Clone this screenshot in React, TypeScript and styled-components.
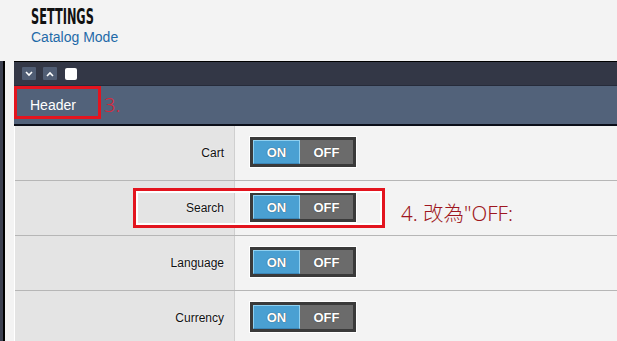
import styled, { createGlobalStyle } from 'styled-components'

const GlobalStyle = createGlobalStyle`
  body {
    margin: 0;
    background: #f3f3f3;
    font-family: "Liberation Sans", Arial, sans-serif;
  }
`

const Page = styled.div`
  display: flex;
  flex-direction: column;
  width: 617px;
  height: 341px;
  overflow: hidden;
`

const Heading = styled.div`
  flex-shrink: 0;
  height: 61px;
  box-sizing: border-box;
  padding: 6px 0 0 31px;
`

const Title = styled.div`
  display: inline-block;
  font-family: "DejaVu Sans Condensed", "Liberation Sans Narrow", sans-serif;
  font-weight: bold;
  font-size: 21px;
  line-height: 23px;
  color: #111;
  transform: scale(0.6, 1.05);
  transform-origin: left center;
`

const Subtitle = styled.div`
  font-size: 14px;
  line-height: 17px;
  color: #1f6aa8;
`

const Main = styled.div`
  display: flex;
  flex: 1;
`

const SideStrip = styled.div`
  width: 3px;
  background: #3c4050;
  border-right: 2px solid #000;
`

const Panel = styled.div`
  flex: 1;
  margin-left: 9px;
  display: flex;
  flex-direction: column;
`

const Toolbar = styled.div`
  flex-shrink: 0;
  height: 23px;
  display: flex;
  align-items: center;
  gap: 7px;
  padding-left: 8px;
  background: #333746;
  border-top: 1px solid #000;
`

const ToolButton = styled.div`
  width: 14px;
  height: 13px;
  display: flex;
  align-items: center;
  justify-content: center;
  background: #505d74;
  border-radius: 1px;
`

const Check = styled.div`
  width: 12px;
  height: 12px;
  margin-left: 1px;
  background: #fff;
  border-radius: 2px;
`

const HeaderBar = styled.div`
  flex-shrink: 0;
  position: relative;
  height: 38px;
  display: flex;
  align-items: center;
  padding-left: 16px;
  background: #52627a;
  border-top: 1px solid #262b3a;
  border-bottom: 2px solid #0b0e18;
  color: #fff;
  font-size: 14px;
`

const Mark = styled.div<{ $top: number; $left: number; $w: number; $h: number; $inner?: boolean }>`
  position: absolute;
  top: ${p => p.$top}px;
  left: ${p => p.$left}px;
  width: ${p => p.$w}px;
  height: ${p => p.$h}px;
  box-sizing: border-box;
  border: 3px solid #e3141e;
  box-shadow: ${p => (p.$inner ? 'inset 0 0 0 2px #fff' : 'none')};
  pointer-events: none;
`

const Note = styled.div<{ $top: number; $left: number; $dark?: boolean }>`
  position: absolute;
  top: ${p => p.$top}px;
  left: ${p => p.$left}px;
  white-space: nowrap;
  font-family: "Noto Sans", "Noto Sans CJK TC", sans-serif;
  font-weight: 300;
  font-size: ${p => (p.$dark ? 20.5 : 20)}px;
  color: ${p => (p.$dark ? '#9e1620' : '#d8283a')};
`

const Rows = styled.div`
  border-left: 1px solid #fff;
`

const Row = styled.div`
  position: relative;
  display: grid;
  grid-template-columns: 220px 1fr;
  height: 54px;
  border-bottom: 1px solid #b6b6b6;
`

const Label = styled.div`
  display: flex;
  align-items: center;
  justify-content: flex-end;
  padding-right: 10px;
  background: #e4e4e4;
  border-right: 1px solid #cfcfcf;
  font-size: 12px;
  color: #111;
  text-shadow: 0 0 2px #fff;
`

const Field = styled.div`
  display: flex;
  align-items: center;
  padding-left: 15px;
`

const Toggle = styled.div`
  display: flex;
  width: 106px;
  height: 30px;
  box-sizing: border-box;
  border: 3px solid #3a3a3a;
  box-shadow: 0 0 0 1px #fff;
  background: #6b6b6b;
  margin-top: -2px;
`

const Side = styled.div<{ $on?: boolean }>`
  display: flex;
  align-items: center;
  justify-content: center;
  width: ${p => (p.$on ? 47 : 53)}px;
  box-sizing: border-box;
  background: ${p => (p.$on ? '#4aa0d2' : '#6b6b6b')};
  border: 1px solid ${p => (p.$on ? '#8fd0f0' : '#6b6b6b')};
  border-bottom-color: ${p => (p.$on ? '#3a86b8' : '#6b6b6b')};
  color: #fff;
  font-size: 13px;
  font-weight: bold;
  text-shadow: 0 0 1px #333;
`

const Chevron = ({ up }: { up?: boolean }) => (
  <svg width="8" height="6" viewBox="0 0 8 6">
    <path
      d={up ? 'M1 5 L4 2 L7 5' : 'M1 1 L4 4 L7 1'}
      fill="none"
      stroke="#fff"
      strokeWidth="1.6"
    />
  </svg>
)

const settings = ['Cart', 'Search', 'Language', 'Currency']

export default function App() {
  return (
    <>
      <GlobalStyle />
      <Page>
        <Heading>
          <Title>SETTINGS</Title>
          <Subtitle>Catalog Mode</Subtitle>
        </Heading>
        <Main>
          <SideStrip />
          <Panel>
            <Toolbar>
              <ToolButton>
                <Chevron />
              </ToolButton>
              <ToolButton>
                <Chevron up />
              </ToolButton>
              <Check />
            </Toolbar>
            <HeaderBar>
              Header
              <Mark $top={0} $left={0} $w={87} $h={33} />
              <Note $top={5} $left={90}>3.</Note>
            </HeaderBar>
            <Rows>
              {settings.map(name => (
                <Row key={name}>
                  <Label>{name}</Label>
                  <Field>
                    <Toggle>
                      <Side $on>ON</Side>
                      <Side>OFF</Side>
                    </Toggle>
                  </Field>
                  {name === 'Search' && (
                    <>
                      <Mark $top={7} $left={118} $w={252} $h={40} $inner />
                      <Note $top={16} $left={386} $dark>
                        4. 改為"OFF:
                      </Note>
                    </>
                  )}
                </Row>
              ))}
            </Rows>
          </Panel>
        </Main>
      </Page>
    </>
  )
}
